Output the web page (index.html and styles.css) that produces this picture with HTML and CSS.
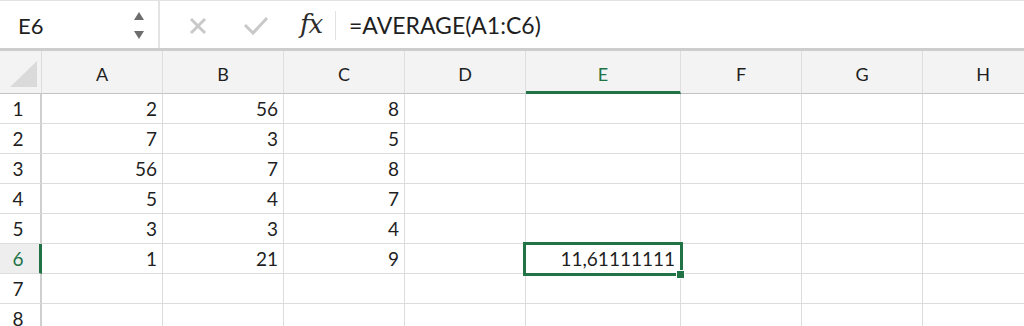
FILE: index.html
```html
<!DOCTYPE html>
<html lang="en">

<head>
    <meta charset="UTF-8">
    <meta name="viewport" content="width=device-width, initial-scale=1.0">
    <title>AVERAGE</title>
    <link rel="stylesheet" href="styles.css">
</head>

<body>
    <div class="formula-bar">
        <div class="name-box">
            <span class="cell-ref">E6</span>
            <div class="spin">
                <svg width="10" height="8" viewBox="0 0 10 8"><path d="M5 0 L10 8 L0 8 Z" fill="#6d6d6d"/></svg>
                <svg width="10" height="8" viewBox="0 0 10 8"><path d="M0 0 L10 0 L5 8 Z" fill="#6d6d6d"/></svg>
            </div>
        </div>
        <div class="actions">
            <svg class="cancel" width="18" height="18" viewBox="0 0 18 18">
                <path d="M2 2 L16 16 M16 2 L2 16" stroke="#c9c9c9" stroke-width="3" fill="none"/>
            </svg>
            <svg class="enter" width="26" height="20" viewBox="0 0 26 20">
                <path d="M2 9 L10 17 L24 2" stroke="#c9c9c9" stroke-width="3" fill="none"/>
            </svg>
            <span class="fx">fx</span>
        </div>
        <div class="formula">=AVERAGE(A1:C6)</div>
    </div>

    <div class="sheet">
        <div class="corner"><span class="tri"></span></div>
        <div class="col-head">A</div>
        <div class="col-head">B</div>
        <div class="col-head">C</div>
        <div class="col-head">D</div>
        <div class="col-head active">E</div>
        <div class="col-head">F</div>
        <div class="col-head">G</div>
        <div class="col-head">H</div>

        <div class="row-head">1</div>
        <div class="cell">2</div><div class="cell">56</div><div class="cell">8</div>
        <div class="cell"></div><div class="cell"></div><div class="cell"></div><div class="cell"></div><div class="cell"></div>

        <div class="row-head">2</div>
        <div class="cell">7</div><div class="cell">3</div><div class="cell">5</div>
        <div class="cell"></div><div class="cell"></div><div class="cell"></div><div class="cell"></div><div class="cell"></div>

        <div class="row-head">3</div>
        <div class="cell">56</div><div class="cell">7</div><div class="cell">8</div>
        <div class="cell"></div><div class="cell"></div><div class="cell"></div><div class="cell"></div><div class="cell"></div>

        <div class="row-head">4</div>
        <div class="cell">5</div><div class="cell">4</div><div class="cell">7</div>
        <div class="cell"></div><div class="cell"></div><div class="cell"></div><div class="cell"></div><div class="cell"></div>

        <div class="row-head">5</div>
        <div class="cell">3</div><div class="cell">3</div><div class="cell">4</div>
        <div class="cell"></div><div class="cell"></div><div class="cell"></div><div class="cell"></div><div class="cell"></div>

        <div class="row-head active">6</div>
        <div class="cell">1</div><div class="cell">21</div><div class="cell">9</div>
        <div class="cell"></div>
        <div class="cell selected">11,61111111<span class="handle"></span></div>
        <div class="cell"></div><div class="cell"></div><div class="cell"></div>

        <div class="row-head">7</div>
        <div class="cell"></div><div class="cell"></div><div class="cell"></div>
        <div class="cell"></div><div class="cell"></div><div class="cell"></div><div class="cell"></div><div class="cell"></div>

        <div class="row-head">8</div>
        <div class="cell"></div><div class="cell"></div><div class="cell"></div>
        <div class="cell"></div><div class="cell"></div><div class="cell"></div><div class="cell"></div><div class="cell"></div>
    </div>
</body>

</html>
```

FILE: styles.css
```css
* {
    box-sizing: border-box;
}

body {
    margin: 0;
    width: 1024px;
    height: 326px;
    overflow: hidden;
    background: #ffffff;
    font-family: "Lato", "Open Sans", sans-serif;
    color: #1f1f1f;
}

/* formula bar */
.formula-bar {
    display: flex;
    align-items: stretch;
    height: 51px;
    border-top: 1px solid #e2e2e2;
    border-bottom: 3px solid #cdcdcd;
    background: #ffffff;
}

.name-box {
    width: 160px;
    display: flex;
    align-items: center;
    justify-content: space-between;
    padding: 0 14px 0 18px;
    border-right: 2px solid #e3e3e3;
}

.cell-ref {
    font-size: 22px;
    padding-top: 2px;
}

.spin {
    display: flex;
    flex-direction: column;
    gap: 11px;
    padding-top: 2px;
}

.actions {
    width: 176px;
    display: flex;
    align-items: center;
    padding-left: 29px;
    border-right: 1px solid #e2e2e2;
    margin: 10px 0 8px;
}

.cancel {
    margin-right: 36px;
}

.enter {
    margin-right: 31px;
}

.fx {
    font-family: "DejaVu Serif", "Liberation Serif", serif;
    font-style: italic;
    font-size: 26px;
    color: #2c2c2c;
    letter-spacing: -1px;
    padding-bottom: 4px;
}

.formula {
    display: flex;
    align-items: center;
    padding-left: 13px;
    padding-top: 1px;
    font-size: 23px;
    color: #1f1f1f;
}

/* sheet */
.sheet {
    display: grid;
    grid-template-columns: 42px 121px 121px 121px 121px 155px 121px 121px 121px;
    grid-template-rows: 43px;
    grid-auto-rows: 30px;
    font-size: 19px;
}

.corner {
    position: relative;
    background: #f3f3f3;
    border-right: 1px solid #dcdcdc;
    border-bottom: 1px solid #c3c3c3;
}

.corner .tri {
    position: absolute;
    right: 4px;
    bottom: 6px;
    width: 27px;
    height: 26px;
    background: #dadada;
    clip-path: polygon(100% 0, 100% 100%, 0 100%);
}

.col-head {
    display: flex;
    align-items: center;
    justify-content: center;
    padding-top: 3px;
    background: #f3f3f3;
    border-right: 1px solid #dedede;
    border-bottom: 1px solid #c3c3c3;
    font-size: 18px;
}

.col-head.active {
    color: #217346;
    border-bottom: 3px solid #217346;
    padding-top: 5px;
}

.row-head {
    display: flex;
    align-items: center;
    justify-content: center;
    padding-right: 4px;
    border-right: 2px solid #cfcfcf;
    border-bottom: 1px solid #dcdcdc;
    font-size: 19px;
}

.row-head.active {
    background: #eeeeee;
    color: #217346;
    border-right: 3px solid #217346;
    padding-right: 3px;
}

.cell {
    display: flex;
    align-items: center;
    justify-content: flex-end;
    padding-right: 5px;
    border-right: 1px solid #dcdcdc;
    border-bottom: 1px solid #dcdcdc;
}

.cell.selected {
    position: relative;
}

.cell.selected::before {
    content: "";
    position: absolute;
    top: -2px;
    left: -3px;
    right: -3px;
    bottom: -3px;
    border: 3px solid #217346;
}

.handle {
    position: absolute;
    right: -5px;
    bottom: -6px;
    width: 9px;
    height: 9px;
    background: #217346;
    border: 1px solid #ffffff;
}
```
